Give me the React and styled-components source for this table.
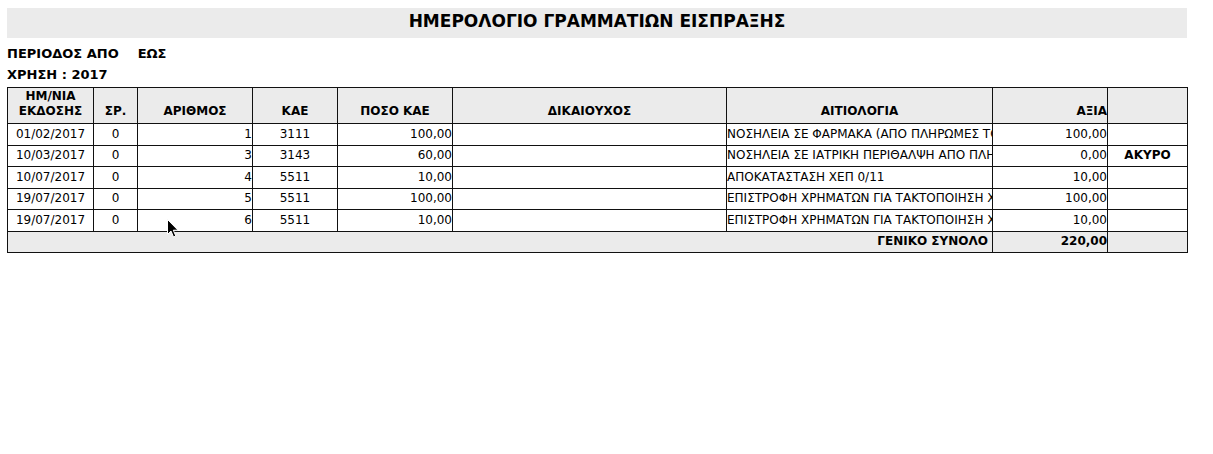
import React from "react";
import styled, { createGlobalStyle } from "styled-components";

const GlobalStyle = createGlobalStyle`
  body {
    margin: 8px 7px;
    background: #fff;
    font-family: "DejaVu Sans", Verdana, sans-serif;
    color: #000;
  }
`;

const Page = styled.div`
  width: 1180px;
  position: relative;
`;

const TitleBar = styled.div`
  height: 30px;
  background: #ebebeb;
  display: flex;
  align-items: center;
  justify-content: center;
  padding-bottom: 5px;
  box-sizing: border-box;
  font-size: 17px;
  font-weight: bold;
`;

const Meta = styled.div`
  margin-top: ${({ $first }) => ($first ? "5px" : "0")};
  height: 21px;
  line-height: 21px;
  font-size: 13px;
  font-weight: bold;
`;

const Gap = styled.span`
  display: inline-block;
  width: 19px;
`;

const Table = styled.table`
  margin-top: 2px;
  width: 1180px;
  table-layout: fixed;
  border-collapse: collapse;
  font-size: 12px;
`;

const HeadRow = styled.tr`
  height: 36px;
`;

const HeadCell = styled.th`
  border: 1px solid #111;
  background: #ebebeb;
  padding: 0 0 4px;
  vertical-align: bottom;
  font-size: 12px;
  line-height: 15px;
  font-weight: bold;
  text-align: ${({ $align }) => $align || "center"};
`;

const Row = styled.tr`
  height: 21.5px;
`;

const Cell = styled.td`
  border: 1px solid #111;
  padding: 0;
  line-height: 15px;
  white-space: nowrap;
  overflow: hidden;
  text-overflow: clip;
  text-align: ${({ $align }) => $align || "center"};
  font-weight: ${({ $bold }) => ($bold ? "bold" : "normal")};
`;

const FootCell = styled.td`
  border: 1px solid #111;
  background: #ebebeb;
  padding: 0 ${({ $pad }) => $pad || "0"} 0 0;
  line-height: 15px;
  text-align: right;
  font-weight: bold;
  white-space: nowrap;
`;

const Pointer = styled.svg`
  position: absolute;
  left: 160px;
  top: 211px;
`;

const widths = [86, 44, 115, 85, 115, 274, 266, 115, 80];

const rows = [
  ["01/02/2017", "0", "1", "3111", "100,00", "", "ΝΟΣΗΛΕΙΑ ΣΕ ΦΑΡΜΑΚΑ (ΑΠΟ ΠΛΗΡΩΜΕΣ ΤΟΥ ΕΟΠΥΥ)", "100,00", ""],
  ["10/03/2017", "0", "3", "3143", "60,00", "", "ΝΟΣΗΛΕΙΑ ΣΕ ΙΑΤΡΙΚΗ ΠΕΡΙΘΑΛΨΗ ΑΠΟ ΠΛΗΡΩΜΕΣ", "0,00", "ΑΚΥΡΟ"],
  ["10/07/2017", "0", "4", "5511", "10,00", "", "ΑΠΟΚΑΤΑΣΤΑΣΗ ΧΕΠ 0/11", "10,00", ""],
  ["19/07/2017", "0", "5", "5511", "100,00", "", "ΕΠΙΣΤΡΟΦΗ ΧΡΗΜΑΤΩΝ ΓΙΑ ΤΑΚΤΟΠΟΙΗΣΗ ΧΕΠ", "100,00", ""],
  ["19/07/2017", "0", "6", "5511", "10,00", "", "ΕΠΙΣΤΡΟΦΗ ΧΡΗΜΑΤΩΝ ΓΙΑ ΤΑΚΤΟΠΟΙΗΣΗ ΧΕΠ", "10,00", ""],
];

const aligns = ["center", "center", "right", "center", "right", "left", "left", "right", "center"];

export default function App() {
  return (
    <Page>
      <GlobalStyle />
      <TitleBar>ΗΜΕΡΟΛΟΓΙΟ ΓΡΑΜΜΑΤΙΩΝ ΕΙΣΠΡΑΞΗΣ</TitleBar>
      <Meta $first>
        ΠΕΡΙΟΔΟΣ ΑΠΟ<Gap />ΕΩΣ
      </Meta>
      <Meta>ΧΡΗΣΗ : 2017</Meta>

      <Table>
        <colgroup>
          {widths.map((w, i) => (
            <col key={i} style={{ width: w }} />
          ))}
        </colgroup>
        <thead>
          <HeadRow>
            <HeadCell>
              ΗΜ/ΝΙΑ
              <br />
              ΕΚΔΟΣΗΣ
            </HeadCell>
            <HeadCell>ΣΡ.</HeadCell>
            <HeadCell>ΑΡΙΘΜΟΣ</HeadCell>
            <HeadCell>ΚΑΕ</HeadCell>
            <HeadCell>ΠΟΣΟ ΚΑΕ</HeadCell>
            <HeadCell>ΔΙΚΑΙΟΥΧΟΣ</HeadCell>
            <HeadCell>ΑΙΤΙΟΛΟΓΙΑ</HeadCell>
            <HeadCell $align="right">ΑΞΙΑ</HeadCell>
            <HeadCell />
          </HeadRow>
        </thead>
        <tbody>
          {rows.map((r, i) => (
            <Row key={i}>
              {r.map((v, j) => (
                <Cell key={j} $align={aligns[j]} $bold={j === 8}>
                  {v}
                </Cell>
              ))}
            </Row>
          ))}
          <Row>
            <FootCell colSpan={7} $pad="4px">
              ΓΕΝΙΚΟ ΣΥΝΟΛΟ
            </FootCell>
            <FootCell>220,00</FootCell>
            <FootCell />
          </Row>
        </tbody>
      </Table>

      <Pointer width="12" height="19" viewBox="0 0 12 19">
        <path d="M0.5 0.5 L0.5 15.5 L4 12 L6.5 18 L8.8 17 L6.3 11.2 L11 11.2 Z" fill="#000" stroke="#fff" strokeWidth="1" />
      </Pointer>
    </Page>
  );
}
